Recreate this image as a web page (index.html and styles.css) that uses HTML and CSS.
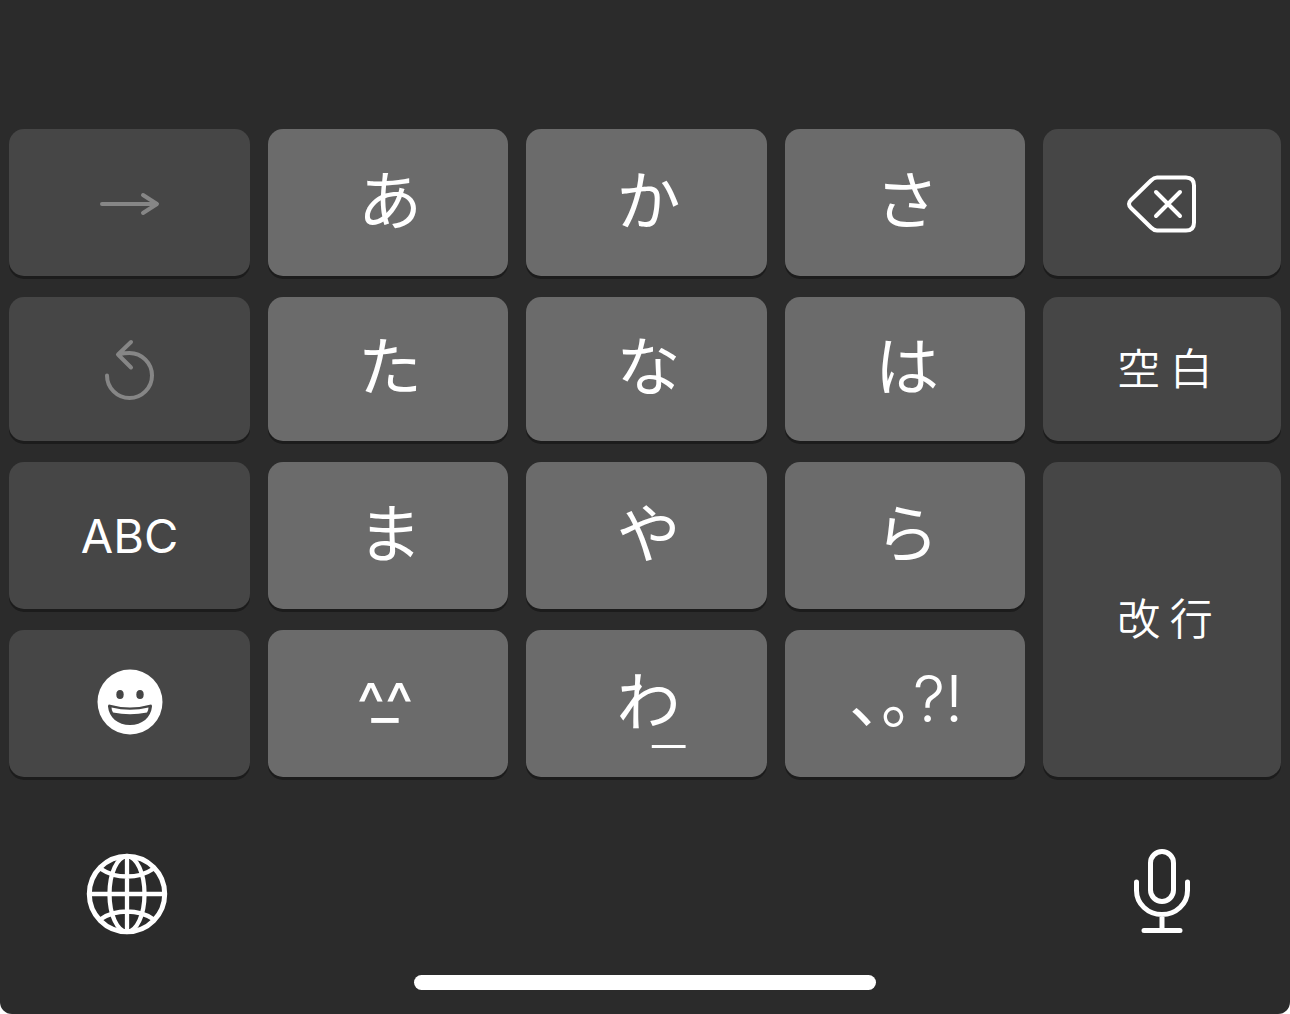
FILE: index.html
```html
<!DOCTYPE html>
<html lang="ja">
<head>
<meta charset="utf-8">
<meta name="viewport" content="width=device-width, initial-scale=1">
<title>かなキーボード</title>
<link rel="stylesheet" href="styles.css">
</head>
<body>
<main class="keyboard">
  <div class="keys">
    <button class="key key-dark key-disabled" aria-label="次候補">
      <svg width="64" height="30" viewBox="0 0 64 30"><path d="M4 16H58M45 7l14 9-14 9"/></svg>
    </button>
    <button class="key kana">あ</button>
    <button class="key kana">か</button>
    <button class="key kana">さ</button>
    <button class="key key-dark" aria-label="削除">
      <svg width="72" height="60" viewBox="0 0 72 60"><path d="M31 4.500H60q8 0 8 8V49.500q0 8-8 8H31q-3 0-6-3L5 35q-4-4 0-8L25 7.500q3-3 6-3Z"/><path d="M30 19l24 24M54 19L30 43"/></svg>
    </button>

    <button class="key key-dark key-disabled" aria-label="元に戻す">
      <svg width="54" height="66" viewBox="0 0 54 66"><path d="M4 39.500a22.500 22.500 0 1 0 22.500-22.500q-5 0-10 1M28 6L15 18.500l13 13"/></svg>
    </button>
    <button class="key kana">た</button>
    <button class="key kana">な</button>
    <button class="key kana">は</button>
    <button class="key key-dark word">空 白</button>

    <button class="key key-dark latin">ABC</button>
    <button class="key kana">ま</button>
    <button class="key kana">や</button>
    <button class="key kana">ら</button>
    <button class="key key-dark key-tall word">改 行</button>

    <button class="key key-dark emoji" aria-label="絵文字">
      <svg class="face" width="66" height="66" viewBox="0 0 66 66">
        <circle class="face-skin" cx="33" cy="33" r="32.500"/>
        <ellipse class="face-ink" cx="23" cy="25.500" rx="3.700" ry="4.500"/>
        <ellipse class="face-ink" cx="43" cy="25.500" rx="3.700" ry="4.500"/>
        <path class="face-ink" d="M12 35.500q21 6 42 0q1 0 1 2c-1 11-10 18.500-22 18.500s-21-7.500-22-18.500q0-2 1-2Z"/>
        <path class="face-skin" d="M14.500 38.500q18.500 4.500 37 0q0 2.500-1.500 5q-17 3.500-34 0q-1.500-2.500-1.500-5Z"/>
      </svg>
    </button>
    <button class="key kaomoji"><span class="marked">^^<span class="mouth">_</span></span></button>
    <button class="key kana"><span class="marked">わ<span class="mark">_</span></span></button>
    <button class="key punct"><span>、。<span class="punct-latin">?!</span></span></button>
  </div>

  <div class="tools">
    <button class="tool" aria-label="キーボード切替">
      <svg width="82" height="82" viewBox="0 0 82 82"><circle cx="41" cy="41" r="37.700"/><g stroke-width="4.300"><ellipse cx="41" cy="41" rx="17.500" ry="37.700"/><path d="M41 3V79M3 41H79M15 16q11 7.500 26 7.500t26-7.500M15 66q11-7.500 26-7.500t26 7.500"/></g></svg>
    </button>
    <button class="tool" aria-label="音声入力">
      <svg width="60" height="88" viewBox="0 0 60 88"><rect x="18.500" y="4.500" width="23" height="50" rx="11.500"/><path d="M4.500 35v8.500a25.500 24 0 0 0 51 0V35M30 68v15M12 83.500h36"/></svg>
    </button>
  </div>
  <div class="home-bar"></div>
</main>
</body>
</html>
```
FILE: styles.css
```css
* {
  box-sizing: border-box;
}

body {
  margin: 0;
  background: #fff;
}

.keyboard {
  display: flex;
  flex-direction: column;
  min-height: 100vh;
  padding: 129px 9px 24px;
  border-radius: 0 0 12px 12px;
  background: #2b2b2b;
  color: #fff;
  font-family: "Noto Sans CJK JP", sans-serif;
}

.keys {
  display: grid;
  grid-template-columns: 241fr 240fr 241fr 240fr 238fr;
  grid-template-rows: 147px 144px 147px 147px;
  gap: 21px 18px;
}

button {
  display: flex;
  align-items: center;
  justify-content: center;
  padding: 0;
  border: 0;
  background: none;
  color: inherit;
  font: inherit;
}

svg {
  display: block;
  fill: none;
  stroke: currentColor;
  stroke-width: 4;
  stroke-linecap: round;
  stroke-linejoin: round;
}

.key {
  min-width: 0;
  border-radius: 15px;
  background: #6b6b6b;
  box-shadow: 0 3px 0 #1c1c1c;
  line-height: 1;
}

.key-dark {
  background: #464646;
}

.key-disabled {
  color: #868686;
}

.key-tall {
  grid-row: span 2;
}

.kana {
  padding: 0 0 14px 4px;
  font-size: 64px;
  font-weight: 400;
}

.word {
  padding: 0 0 6px 6px;
  font-size: 43px;
  font-weight: 350;
}

.latin {
  font-family: Inter, sans-serif;
  font-size: 47px;
}

.emoji {
  padding-bottom: 4px;
}

.marked {
  position: relative;
}

.kaomoji {
  padding: 0 6px 2px 0;
  font-family: Inter, sans-serif;
  font-size: 60px;
}

.mouth {
  position: absolute;
  top: -7px;
  left: 0;
  right: 0;
  text-align: center;
}

.mark {
  position: absolute;
  right: -6px;
  bottom: -15px;
  font-weight: 300;
}

.punct {
  padding: 0 0 14px 2px;
  font-size: 64px;
  font-weight: 400;
  font-feature-settings: "halt";
}

.punct-latin {
  font-family: Inter, sans-serif;
  font-weight: 300;
}

.face {
  stroke: none;
}

.face-skin {
  fill: #fff;
}

.face-ink {
  fill: #464646;
}

.tools {
  display: flex;
  align-items: flex-end;
  justify-content: space-between;
  padding: 70px 89px 0 77px;
}

.tool svg {
  stroke-width: 5;
}

.home-bar {
  width: 462px;
  max-width: 60%;
  height: 15px;
  margin: auto auto 0;
  border-radius: 8px;
  background: #fff;
}
```
